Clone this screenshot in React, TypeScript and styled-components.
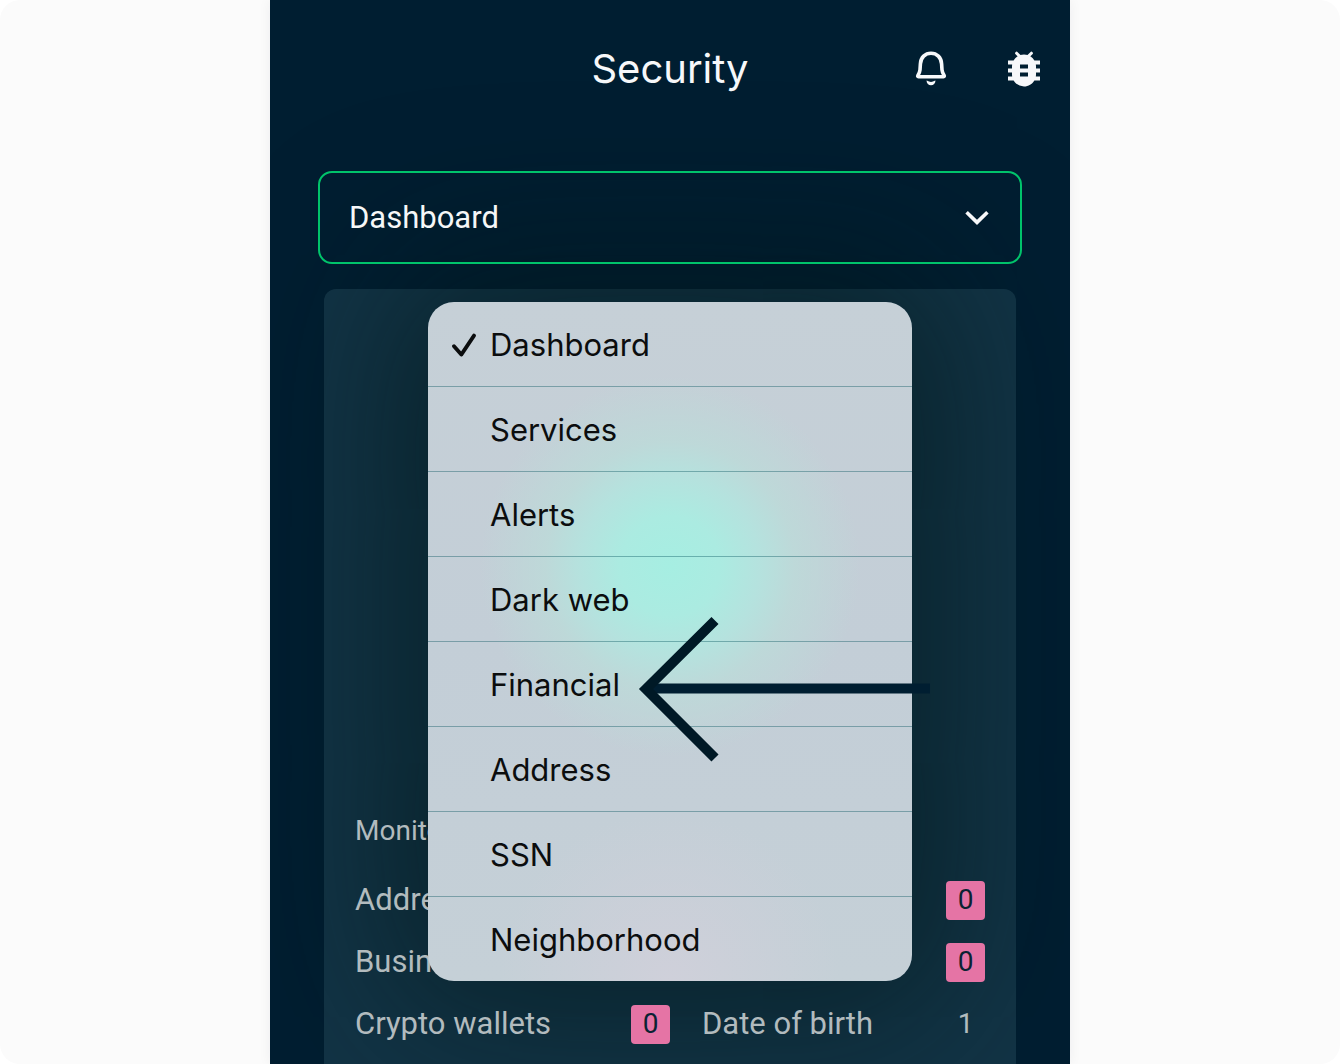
import React, { useState } from 'react';
import styled, { createGlobalStyle } from 'styled-components';

const GlobalStyle = createGlobalStyle`
  *, *::before, *::after { box-sizing: border-box; }
  body {
    margin: 0;
    background: #ffffff;
    font-family: Roboto, "Noto Sans", sans-serif;
    -webkit-font-smoothing: antialiased;
  }
  button, select { font: inherit; color: inherit; }
`;

const Page = styled.div`
  display: flex;
  justify-content: center;
  height: 100vh;
  overflow: hidden;
  background: #fbfbfb;
  border-radius: 20px;
`;

const Phone = styled.div`
  display: flex;
  flex-direction: column;
  width: 100%;
  max-width: 800px;
  overflow: hidden;
  background: #001e31;
  box-shadow: 0 0 12px rgba(0, 30, 49, 0.06);
`;

const Header = styled.header`
  display: grid;
  grid-template-columns: 1fr auto 1fr;
  align-items: center;
  height: 138px;
  flex: none;
  padding: 0 22px;
`;

const Title = styled.h1`
  grid-column: 2;
  margin: 0;
  font: 400 40px/48px Inter, sans-serif;
  color: #f7f8fa;
`;

const HeaderActions = styled.div`
  display: flex;
  justify-content: flex-end;
  gap: 45px;
`;

const IconButton = styled.button`
  display: flex;
  padding: 0;
  border: 0;
  background: none;
  color: #f7f8fa;
  cursor: pointer;
`;

const Main = styled.main`
  display: flex;
  flex-direction: column;
  flex: 1;
  gap: 25px;
  padding: 33px 48px 0;
`;

const SectionPicker = styled.div`
  position: relative;
  z-index: 1;
  display: grid;
  align-items: center;
`;

const PickerSelect = styled.select`
  grid-area: 1 / 1;
  appearance: none;
  width: 100%;
  height: 93px;
  padding: 0 80px 0 29px;
  border: 2px solid #00c46b;
  border-radius: 14px;
  outline: none;
  background: transparent;
  color: #f5f7f8;
  font-size: 31px;
`;

const PickerChevron = styled.svg`
  grid-area: 1 / 1;
  justify-self: end;
  margin-right: 33px;
  pointer-events: none;
`;

const Menu = styled.ul`
  position: absolute;
  top: calc(100% + 38px);
  left: 50%;
  width: 484px;
  margin: 0;
  padding: 0;
  list-style: none;
  transform: translateX(-50%);
  border-radius: 26px;
  background:
    radial-gradient(circle at 242px 264px, #a6eee2 0, #abebe1 50px, #b5e2de 90px, rgba(188, 219, 217, 0.8) 125px, rgba(196, 208, 215, 0) 190px),
    radial-gradient(circle at 242px 679px, #cfd0da 0, rgba(207, 208, 218, 0) 170px),
    linear-gradient(#c6d0d7, #c3ced7 50%, #c5d0d7);
`;

const MenuRow = styled.li`
  & + & { border-top: 1px solid rgba(0, 80, 90, 0.38); }
`;

const MenuItem = styled.button`
  display: grid;
  grid-template-columns: 24px 1fr;
  column-gap: 14px;
  align-items: center;
  width: 100%;
  height: 84px;
  padding: 2px 24px 0;
  border: 0;
  background: none;
  color: #0b0d0e;
  font: 400 31px/40px Inter, sans-serif;
  text-align: left;
  cursor: pointer;
`;

const MenuLabel = styled.span`
  grid-column: 2;
`;

const Pointer = styled.svg`
  position: absolute;
  z-index: 1;
  top: calc(100% + 352px);
  left: 320px;
  pointer-events: none;
`;

/* The menu's shade falls on the card's surface, under its text and badges. */
const Card = styled.section`
  position: relative;
  flex: 1 0 auto;
  margin: 0 6px;
  padding: 524px 31px 40px;
  border-radius: 12px 12px 0 0;
  background: #123446;
  color: #b2bbbe;

  &::before {
    content: "";
    position: absolute;
    top: 13px;
    left: 50%;
    width: 484px;
    height: 679px;
    transform: translateX(-50%);
    border-radius: 26px;
    box-shadow: 0 0 160px 30px rgba(0, 20, 20, 0.58);
  }
`;

const CardBody = styled.div`
  position: relative;
`;

const CardTitle = styled.h2`
  margin: 0 0 31px;
  font-size: 28px;
  font-weight: 400;
  line-height: 36px;
`;

const Columns = styled.div`
  display: grid;
  grid-template-columns: 315fr 283fr;
  column-gap: 32px;
`;

const Stats = styled.dl`
  display: flex;
  flex-direction: column;
  gap: 22px;
  margin: 0;
`;

const Stat = styled.div`
  display: flex;
  align-items: center;
  justify-content: space-between;
  height: 40px;
`;

const StatName = styled.dt`
  font-size: 31px;
  line-height: 38px;
`;

const StatValue = styled.dd<{ $empty: boolean }>`
  width: 39px;
  height: 39px;
  margin: 0 0 0 auto;
  border-radius: 4px;
  background: ${({ $empty }) => ($empty ? '#e574a5' : 'transparent')};
  color: ${({ $empty }) => ($empty ? '#0b2233' : 'inherit')};
  font-size: 28px;
  line-height: 38px;
  text-align: center;
`;

const sections = ['Dashboard', 'Services', 'Alerts', 'Dark web', 'Financial', 'Address', 'SSN', 'Neighborhood'];

type StatEntry = { id: string; name?: string; value?: number };

const columns: StatEntry[][] = [
  [
    { id: 'address', name: 'Addresses' },
    { id: 'business', name: 'Business' },
    { id: 'crypto', name: 'Crypto wallets', value: 0 },
  ],
  [
    { id: 'first', value: 0 },
    { id: 'second', value: 0 },
    { id: 'birth', name: 'Date of birth', value: 1 },
  ],
];

function BellIcon() {
  return (
    <svg width="48" height="48" viewBox="0 0 48 48" fill="none" aria-hidden="true">
      <path
        d="M24 8.200c-5.900 0-10.200 4.300-10.600 10.600l-.4 6c-.2 2.300-1.100 3.900-2.100 5.700-.4.700-.2 1.300.6 1.300h25c.8 0 1-.6.600-1.300-1-1.800-1.900-3.400-2.100-5.700l-.4-6C34.200 12.500 29.900 8.200 24 8.200Z"
        stroke="currentColor"
        strokeWidth="3.600"
        strokeLinejoin="round"
      />
      <path d="M19.500 35.500c1.200.2 1.800.8 2.500 1.100 1.400.5 2.600.5 4 0 .7-.3 1.300-.9 2.500-1.100-.1 3-2 4.800-4.500 4.800s-4.400-1.800-4.500-4.800Z" fill="currentColor" />
    </svg>
  );
}

function BugIcon() {
  return (
    <svg width="48" height="48" viewBox="0 0 24 24" aria-hidden="true">
      <path
        fill="currentColor"
        d="M20 7.700h-2.810c-.45-.78-1.070-1.450-1.820-1.960-.9-.6-2-1-3.370-1s-2.500.4-3.380 1c-.74.510-1.360 1.180-1.810 1.960H4v2h2.090c-.05.330-.09.660-.09 1v1H4v2h2v1c0 .340.040.670.090 1H4v2h2.810c1.040 1.790 2.970 3 5.190 3s4.150-1.210 5.190-3H20v-2h-2.090c.05-.330.090-.660.090-1v-1h2v-2h-2v-1c0-.340-.040-.670-.090-1H20v-2Zm-6 8h-4v-2h4v2Zm0-4h-4v-2h4v2Z"
      />
      <path d="M8.300 4.100l1.800 1.800M15.700 4.100l-1.800 1.800" stroke="currentColor" strokeWidth="1.500" strokeLinecap="round" />
    </svg>
  );
}

export default function App() {
  const [current, setCurrent] = useState('Dashboard');

  return (
    <>
      <GlobalStyle />
      <Page>
        <Phone>
          <Header>
            <Title>Security</Title>
            <HeaderActions>
              <IconButton type="button" aria-label="Notifications"><BellIcon /></IconButton>
              <IconButton type="button" aria-label="Report a bug"><BugIcon /></IconButton>
            </HeaderActions>
          </Header>
          <Main>
            <SectionPicker>
              <PickerSelect aria-label="Section" value={current} onChange={(e) => setCurrent(e.target.value)}>
                {sections.map((name) => <option key={name}>{name}</option>)}
              </PickerSelect>
              <PickerChevron width="24" height="16" viewBox="0 0 24 16" fill="none" aria-hidden="true">
                <path d="M1.600 2.200 12 12.400 22.400 2.200" stroke="#f7f8fa" strokeWidth="3.600" />
              </PickerChevron>
              <Menu>
                {sections.map((name) => (
                  <MenuRow key={name}>
                    <MenuItem type="button" onClick={() => setCurrent(name)}>
                      {name === current && (
                        <svg width="24" height="24" viewBox="0 0 24 24" fill="none" aria-hidden="true">
                          <path d="M2 13.200 9.300 21.600 22 2.600" stroke="currentColor" strokeWidth="3.800" strokeLinecap="round" strokeLinejoin="round" />
                        </svg>
                      )}
                      <MenuLabel>{name}</MenuLabel>
                    </MenuItem>
                  </MenuRow>
                ))}
              </Menu>
              <Pointer width="294" height="148" viewBox="0 0 294 148" fill="none" aria-hidden="true">
                <path d="M12 72.500H292" stroke="#001e31" strokeWidth="10" />
                <path d="M77 4.500 8 73l69 69" stroke="#001926" strokeWidth="10" />
              </Pointer>
            </SectionPicker>
            <Card>
              <CardBody>
                <CardTitle>Monitored</CardTitle>
                <Columns>
                  {columns.map((stats) => (
                    <Stats key={stats[0].id}>
                      {stats.map(({ id, name, value }) => (
                        <Stat key={id}>
                          {name && <StatName>{name}</StatName>}
                          {value !== undefined && <StatValue $empty={value === 0}>{value}</StatValue>}
                        </Stat>
                      ))}
                    </Stats>
                  ))}
                </Columns>
              </CardBody>
            </Card>
          </Main>
        </Phone>
      </Page>
    </>
  );
}
